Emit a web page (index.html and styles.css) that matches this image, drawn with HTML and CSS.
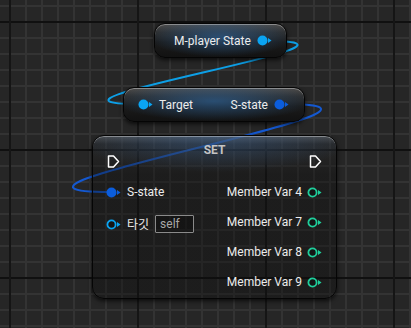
FILE: index.html
```html
<!DOCTYPE html>
<html lang="ko">
<head>
  <meta charset="UTF-8">
  <title>Blueprint - SET</title>
  <link rel="stylesheet" href="styles.css">
</head>
<body>
  <div class="graph">
    <!-- wires sit under the nodes -->
    <svg class="wires" width="411" height="328" viewBox="0 0 411 328">
      <path class="wire wire-light" d="M268 41 C408 41, -2 104, 138 104"/>
      <path class="wire wire-dark" d="M284 104 C462 104, -68 192, 110 192"/>
    </svg>

    <div class="node pure node-player">
      <span class="label">M-player State</span>
      <svg class="pin" width="15" height="11" viewBox="0 0 15 11"><circle cx="5.5" cy="5.5" r="5" class="fill-light"/><polygon points="11,3 14.5,5.5 11,8" class="fill-light"/></svg>
    </div>

    <div class="node pure node-target">
      <div class="side">
        <svg class="pin" width="15" height="11" viewBox="0 0 15 11"><circle cx="5.5" cy="5.5" r="5" class="fill-light"/><polygon points="11,3 14.5,5.5 11,8" class="fill-light"/></svg>
        <span class="label">Target</span>
      </div>
      <div class="side">
        <span class="label">S-state</span>
        <svg class="pin" width="15" height="11" viewBox="0 0 15 11"><circle cx="5.5" cy="5.5" r="5" class="fill-dark"/><polygon points="11,3 14.5,5.5 11,8" class="fill-dark"/></svg>
      </div>
    </div>

    <div class="node node-set">
      <div class="set-title">SET</div>
      <div class="exec-row">
        <svg class="exec" width="13" height="13" viewBox="0 0 13 13"><path d="M1.5 1 H6.5 L11.5 6.5 L6.5 12 H1.5 Z"/></svg>
        <svg class="exec" width="13" height="13" viewBox="0 0 13 13"><path d="M1.5 1 H6.5 L11.5 6.5 L6.5 12 H1.5 Z"/></svg>
      </div>
      <div class="set-body">
        <div class="col col-in">
          <div class="row">
            <svg class="pin" width="15" height="11" viewBox="0 0 15 11"><circle cx="5.5" cy="5.5" r="5" class="fill-dark"/><polygon points="11,3 14.5,5.5 11,8" class="fill-dark"/></svg>
            <span class="label">S-state</span>
          </div>
          <div class="row row-tall">
            <svg class="pin" width="15" height="11" viewBox="0 0 15 11"><circle cx="5.5" cy="5.5" r="4.1" class="ring-light"/><polygon points="11,3 14.5,5.5 11,8" class="fill-light"/></svg>
            <span class="label kr">타깃</span>
            <span class="self-box">self</span>
          </div>
        </div>
        <div class="col col-out">
          <div class="row">
            <span class="label">Member Var 4</span>
            <svg class="pin" width="15" height="11" viewBox="0 0 15 11"><circle cx="5.5" cy="5.5" r="4.1" class="ring-teal"/><polygon points="11,3 14.5,5.5 11,8" class="fill-teal"/></svg>
          </div>
          <div class="row">
            <span class="label">Member Var 7</span>
            <svg class="pin" width="15" height="11" viewBox="0 0 15 11"><circle cx="5.5" cy="5.5" r="4.1" class="ring-teal"/><polygon points="11,3 14.5,5.5 11,8" class="fill-teal"/></svg>
          </div>
          <div class="row">
            <span class="label">Member Var 8</span>
            <svg class="pin" width="15" height="11" viewBox="0 0 15 11"><circle cx="5.5" cy="5.5" r="4.1" class="ring-teal"/><polygon points="11,3 14.5,5.5 11,8" class="fill-teal"/></svg>
          </div>
          <div class="row">
            <span class="label">Member Var 9</span>
            <svg class="pin" width="15" height="11" viewBox="0 0 15 11"><circle cx="5.5" cy="5.5" r="4.1" class="ring-teal"/><polygon points="11,3 14.5,5.5 11,8" class="fill-teal"/></svg>
          </div>
        </div>
      </div>
    </div>
  </div>
</body>
</html>
```

FILE: styles.css
```css
body {
  margin: 0;
  background-color: #262626;
  font-family: Roboto, "Noto Sans", "Noto Sans CJK KR", sans-serif;
  font-size: 12px;
  color: #ececec;
}
.graph {
  position: relative;
  width: 411px;
  height: 328px;
  overflow: hidden;
  background-color: #262626;
  background-image:
    linear-gradient(to right, #151515 2px, transparent 2px),
    linear-gradient(to bottom, #101010 2px, transparent 2px),
    linear-gradient(to right, #333 2px, transparent 2px),
    linear-gradient(to bottom, #333 2px, transparent 2px);
  background-size: 128px 128px, 128px 128px, 16px 16px, 16px 16px;
  background-position: 9px 21px;
}
.wires {
  position: absolute;
  left: 0;
  top: 0;
}
.wire {
  fill: none;
  stroke-width: 2;
}
.wire-light {
  stroke: #0d9fe6;
}
.wire-dark {
  stroke: #1458d0;
}

/* nodes */
.node {
  position: absolute;
  box-sizing: border-box;
  border: 1px solid #050505;
  box-shadow: inset 0 1px 0 rgba(255,255,255,0.35), 0 2px 4px rgba(0,0,0,0.7);
}
.pure {
  display: flex;
  align-items: center;
  height: 35px;
  border-radius: 11px;
  background:
    radial-gradient(ellipse 55% 60% at 50% 40%, rgba(45,105,165,0.6), rgba(45,105,165,0) 100%),
    linear-gradient(180deg, #4e4e4e 0%, #2e2e2e 25%, #1b1b1b 55%, #121212 100%);
}
.node-player {
  left: 154px;
  top: 23px;
  width: 133px;
  padding-left: 19px;
  gap: 6px;
}
.node-target {
  left: 123px;
  top: 87px;
  width: 182px;
  padding: 0 15px 0 14px;
  justify-content: space-between;
}
.side {
  display: flex;
  align-items: center;
  gap: 6px;
}
.label {
  white-space: nowrap;
  line-height: 14px;
}
.pin {
  display: block;
  flex: none;
}
.fill-light { fill: #0aa4f2; }
.fill-dark { fill: #0b5ddc; }
.fill-teal { fill: #1fcf9c; }
.ring-light {
  fill: #151515;
  stroke: #0aa4f2;
  stroke-width: 1.8;
}
.ring-teal {
  fill: #151515;
  stroke: #1fcf9c;
  stroke-width: 1.8;
}

/* SET node */
.node-set {
  left: 92px;
  top: 135px;
  width: 245px;
  height: 164px;
  border-radius: 12px;
  background:
    radial-gradient(ellipse 60% 36px at 50% 0, rgba(60,105,160,0.45), rgba(60,105,160,0) 100%),
    linear-gradient(180deg, rgba(90,90,90,0.7) 0, rgba(40,40,40,0.45) 8px, rgba(25,25,25,0.4) 28px, rgba(12,12,12,0.36) 38px);
}
.set-title {
  padding-top: 7px;
  line-height: 14px;
  text-align: center;
  font-weight: bold;
  color: #c4c4c4;
}
.exec-row {
  display: flex;
  justify-content: space-between;
  margin-top: -2px;
  padding: 0 14px;
}
.exec {
  display: block;
}
.exec path {
  fill: none;
  stroke: #fff;
  stroke-width: 1.5;
  stroke-linejoin: round;
}
.set-body {
  display: flex;
  justify-content: space-between;
  margin-top: 9px;
}
.col {
  display: flex;
  flex-direction: column;
}
.col-in {
  padding-left: 13px;
}
.col-out {
  padding-right: 14px;
  align-items: flex-end;
}
.row {
  display: flex;
  align-items: center;
  height: 30px;
  gap: 6px;
}
.col-out .row {
  gap: 5px;
}
.row-tall {
  height: 34px;
}
.kr {
  font-family: "Noto Sans CJK KR", sans-serif;
}
.self-box {
  box-sizing: border-box;
  width: 39px;
  height: 18px;
  padding-left: 4px;
  border: 1px solid #8a8a8a;
  border-radius: 1px;
  line-height: 16px;
  color: #a8a8a8;
  background-color: rgba(10,10,10,0.4);
}
```
